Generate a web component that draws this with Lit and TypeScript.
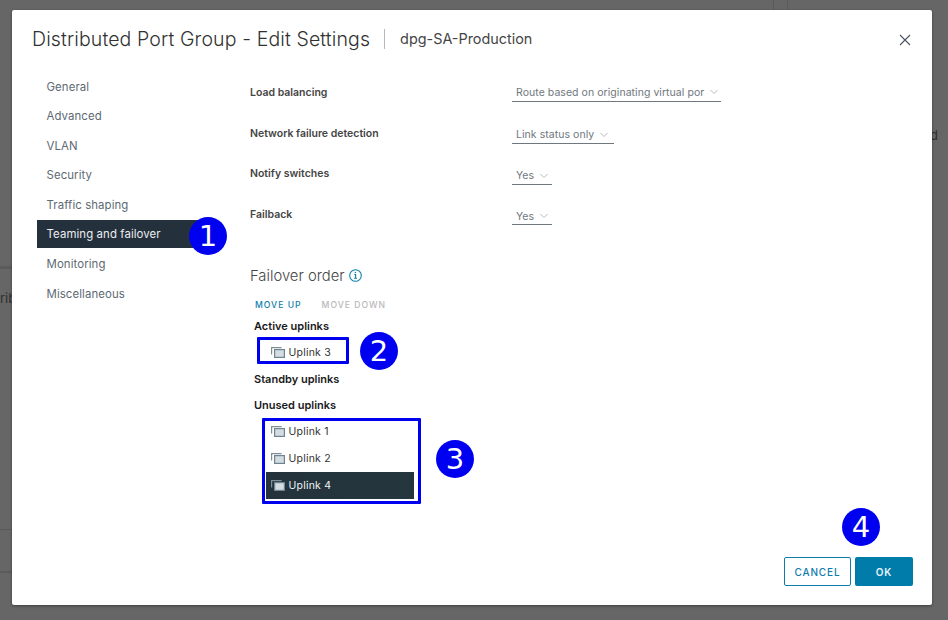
import { LitElement, html, css, svg } from 'lit';
import { customElement } from 'lit/decorators.js';

const navItems = [
  'General',
  'Advanced',
  'VLAN',
  'Security',
  'Traffic shaping',
  'Teaming and failover',
  'Monitoring',
  'Miscellaneous',
];

const formRows = [
  { label: 'Load balancing', value: 'Route based on originating virtual por', width: 209 },
  { label: 'Network failure detection', value: 'Link status only', width: 102 },
  { label: 'Notify switches', value: 'Yes', width: 40 },
  { label: 'Failback', value: 'Yes', width: 40 },
];

const badges = [
  { n: 1, x: 189, y: 217 },
  { n: 2, x: 360, y: 332 },
  { n: 3, x: 436, y: 440 },
  { n: 4, x: 842, y: 508 },
];

const uplinkIcon = svg`<svg class="uplink-icon" width="14" height="11" viewBox="0 0 14 11">
  <path d="M.6 7.500V.6h10" fill="none" stroke="#7f8f98" stroke-width="1.2" />
  <rect x="3.600" y="2.600" width="9.800" height="7.800" fill="#d3dde2" stroke="#6f8390" stroke-width="1.2" />
</svg>`;

@customElement('app-root')
export class AppRoot extends LitElement {
  static styles = css`
    * {
      box-sizing: border-box;
    }
    :host {
      display: block;
      box-sizing: border-box;
      position: relative;
      width: 948px;
      height: 620px;
      overflow: hidden;
      padding: 10px 16px 15px 12px;
      background: #666;
      font-family: Inter, 'Noto Sans', sans-serif;
    }
    .ghost {
      position: absolute;
      background: #5b5b5b;
    }
    .ghost-text {
      position: absolute;
      color: #2f2f2f;
      font-size: 13px;
    }
    .modal {
      position: relative;
      display: flex;
      flex-direction: column;
      height: 595px;
      background: #fff;
      border-radius: 2px;
      box-shadow: 0 1px 3px rgba(0, 0, 0, 0.4);
    }
    .header {
      display: flex;
      align-items: center;
      height: 56px;
      padding: 2px 20px 0;
    }
    .title {
      font-size: 19.5px;
      font-weight: 300;
      color: #313131;
      letter-spacing: 0.12px;
    }
    .subtitle {
      margin-left: 14px;
      padding-left: 15px;
      border-left: 1px solid #b9b9b9;
      font-size: 14.4px;
      line-height: 20px;
      color: #454545;
    }
    .close {
      margin-left: auto;
      margin-top: 2px;
      margin-right: 1px;
    }
    .body {
      display: flex;
      flex: 1;
    }
    .nav {
      width: 213px;
      padding: 5.750px 0 0 25px;
    }
    .nav-item {
      display: flex;
      align-items: center;
      height: 29.6px;
      padding-left: 9.500px;
      font-size: 11.4px;
      letter-spacing: 0.1px;
      color: #5d6973;
    }
    .nav-item.active {
      width: 168px;
      height: 28px;
      margin: 0.75px 0 0.85px;
      background: #25303d;
      color: #eaeef0;
    }
    .main {
      flex: 1;
      padding: 16px 0 0 25px;
    }
    .row {
      display: grid;
      grid-template-columns: 262px auto;
      justify-content: start;
      height: 40.7px;
    }
    .row-label {
      padding-top: 4px;
      font-size: 10.5px;
      font-weight: 600;
      color: #454545;
    }
    .select {
      display: flex;
      align-items: center;
      height: 20px;
      padding: 1px 0 0 4px;
      border-bottom: 1px solid #6d7880;
      font-size: 10.5px;
      letter-spacing: 0.05px;
      color: #6f777e;
      white-space: nowrap;
    }
    .row:not(:first-child) .select {
      margin-top: 1.3px;
      padding-top: 3px;
    }
    .select svg {
      margin-left: 6px;
    }
    .failover {
      display: flex;
      align-items: center;
      gap: 4.500px;
      margin-top: 21px;
      height: 20px;
      font-size: 14.8px;
      font-weight: 300;
      color: #454545;
    }
    .actions {
      display: flex;
      gap: 20px;
      margin-top: 13px;
      padding-left: 5px;
      font-size: 8.6px;
      font-weight: 500;
      letter-spacing: 1px;
      line-height: 12px;
      color: #0f80ab;
    }
    .actions .off {
      color: #b8b8b8;
    }
    .group-title {
      padding-left: 4px;
      font-size: 11px;
      font-weight: 600;
      color: #1a1a1a;
      height: 16px;
      line-height: 14px;
    }
    .active-title {
      margin-top: 8px;
    }
    .standby-title {
      margin-top: 0;
    }
    .unused-title {
      margin-top: 10px;
    }
    .list {
      padding-left: 16px;
    }
    .list.active-list {
      height: 37px;
      padding-top: 4px;
    }
    .list.unused-list {
      margin-top: 4px;
      padding-top: 0;
    }
    .uplink {
      display: flex;
      align-items: center;
      gap: 3.500px;
      width: 148px;
      height: 27px;
      padding-left: 5px;
      font-size: 10.5px;
      letter-spacing: 0.2px;
      color: #333;
    }
    .uplink.selected {
      background: linear-gradient(90deg, #24333b, #25363f);
      color: #eef2f3;
    }
    .footer {
      display: flex;
      justify-content: flex-end;
      gap: 4px;
      padding: 0 19px 19px 0;
    }
    .btn {
      display: flex;
      align-items: center;
      justify-content: center;
      height: 29px;
      border-radius: 2px;
      font-size: 10px;
      font-weight: 500;
      letter-spacing: 0.9px;
    }
    .btn.cancel {
      width: 67px;
      border: 1px solid #0f7cab;
      color: #0f7cab;
    }
    .btn.ok {
      width: 58px;
      background: #007cab;
      color: #e8f3f8;
      font-weight: 600;
    }
    .mark {
      position: absolute;
      border: 3px solid #0000f0;
      border-radius: 1px;
    }
    .badge {
      position: absolute;
      display: flex;
      align-items: center;
      justify-content: center;
      width: 38px;
      height: 38px;
      border-radius: 50%;
      background: #0000f0;
      color: #fff;
      font-family: 'DejaVu Sans', sans-serif;
      font-size: 29px;
    }
  `;

  private chevron() {
    return html`<svg width="8" height="6" viewBox="0 0 8 6">
      <path d="M.5 1 4 4.500 7.500 1" fill="none" stroke="#b5babe" stroke-width="1" />
    </svg>`;
  }

  private uplink(name: string, selected = false) {
    return html`<div class="uplink ${selected ? 'selected' : ''}">
      ${uplinkIcon}<span>${name}</span>
    </div>`;
  }

  render() {
    return html`
      <div class="ghost" style="left:0;top:266px;width:12px;height:3px"></div>
      <div class="ghost" style="left:0;top:529px;width:12px;height:1px"></div>
      <div class="ghost" style="left:0;top:571px;width:12px;height:2px"></div>
      <div class="ghost" style="left:773px;top:0;width:1px;height:10px"></div>
      <div class="ghost" style="left:787px;top:0;width:1px;height:10px"></div>
      <div class="ghost-text" style="left:0;top:290px">rib</div>
      <div class="ghost-text" style="left:930px;top:127px">d</div>

      <div class="modal">
        <div class="header">
          <div class="title">Distributed Port Group - Edit Settings</div>
          <div class="subtitle">dpg-SA-Production</div>
          <svg class="close" width="12" height="12" viewBox="0 0 12 12">
            <path d="M1 1l10 10M11 1 1 11" fill="none" stroke="#48555f" stroke-width="1.1" />
          </svg>
        </div>
        <div class="body">
          <div class="nav">
            ${navItems.map(
              (item) =>
                html`<div class="nav-item ${item === 'Teaming and failover' ? 'active' : ''}">
                  ${item}
                </div>`,
            )}
          </div>
          <div class="main">
            ${formRows.map(
              (row) => html`<div class="row">
                <div class="row-label">${row.label}</div>
                <div class="select" style="width:${row.width}px">${row.value}${this.chevron()}</div>
              </div>`,
            )}
            <div class="failover">
              Failover order
              <svg width="13" height="13" viewBox="0 0 13 13">
                <circle cx="6.500" cy="6.500" r="5.800" fill="none" stroke="#0f80ab" stroke-width="1.1" />
                <path d="M5.300 5.500h1.300v3.500M5 9.300h3" fill="none" stroke="#0f80ab" stroke-width="1.1" />
                <circle cx="6.400" cy="3.500" r=".8" fill="#0f80ab" />
              </svg>
            </div>
            <div class="actions"><span>MOVE UP</span><span class="off">MOVE DOWN</span></div>
            <div class="group-title active-title">Active uplinks</div>
            <div class="list active-list">${this.uplink('Uplink 3')}</div>
            <div class="group-title standby-title">Standby uplinks</div>
            <div class="group-title unused-title">Unused uplinks</div>
            <div class="list unused-list">
              ${this.uplink('Uplink 1')} ${this.uplink('Uplink 2')} ${this.uplink('Uplink 4', true)}
            </div>
          </div>
        </div>
        <div class="footer">
          <div class="btn cancel">CANCEL</div>
          <div class="btn ok">OK</div>
        </div>
      </div>

      <div class="mark" style="left:257px;top:337px;width:92px;height:27px"></div>
      <div class="mark" style="left:262px;top:418px;width:159px;height:86px"></div>
      ${badges.map(
        (b) => html`<div class="badge" style="left:${b.x}px;top:${b.y}px">${b.n}</div>`,
      )}
    `;
  }
}
